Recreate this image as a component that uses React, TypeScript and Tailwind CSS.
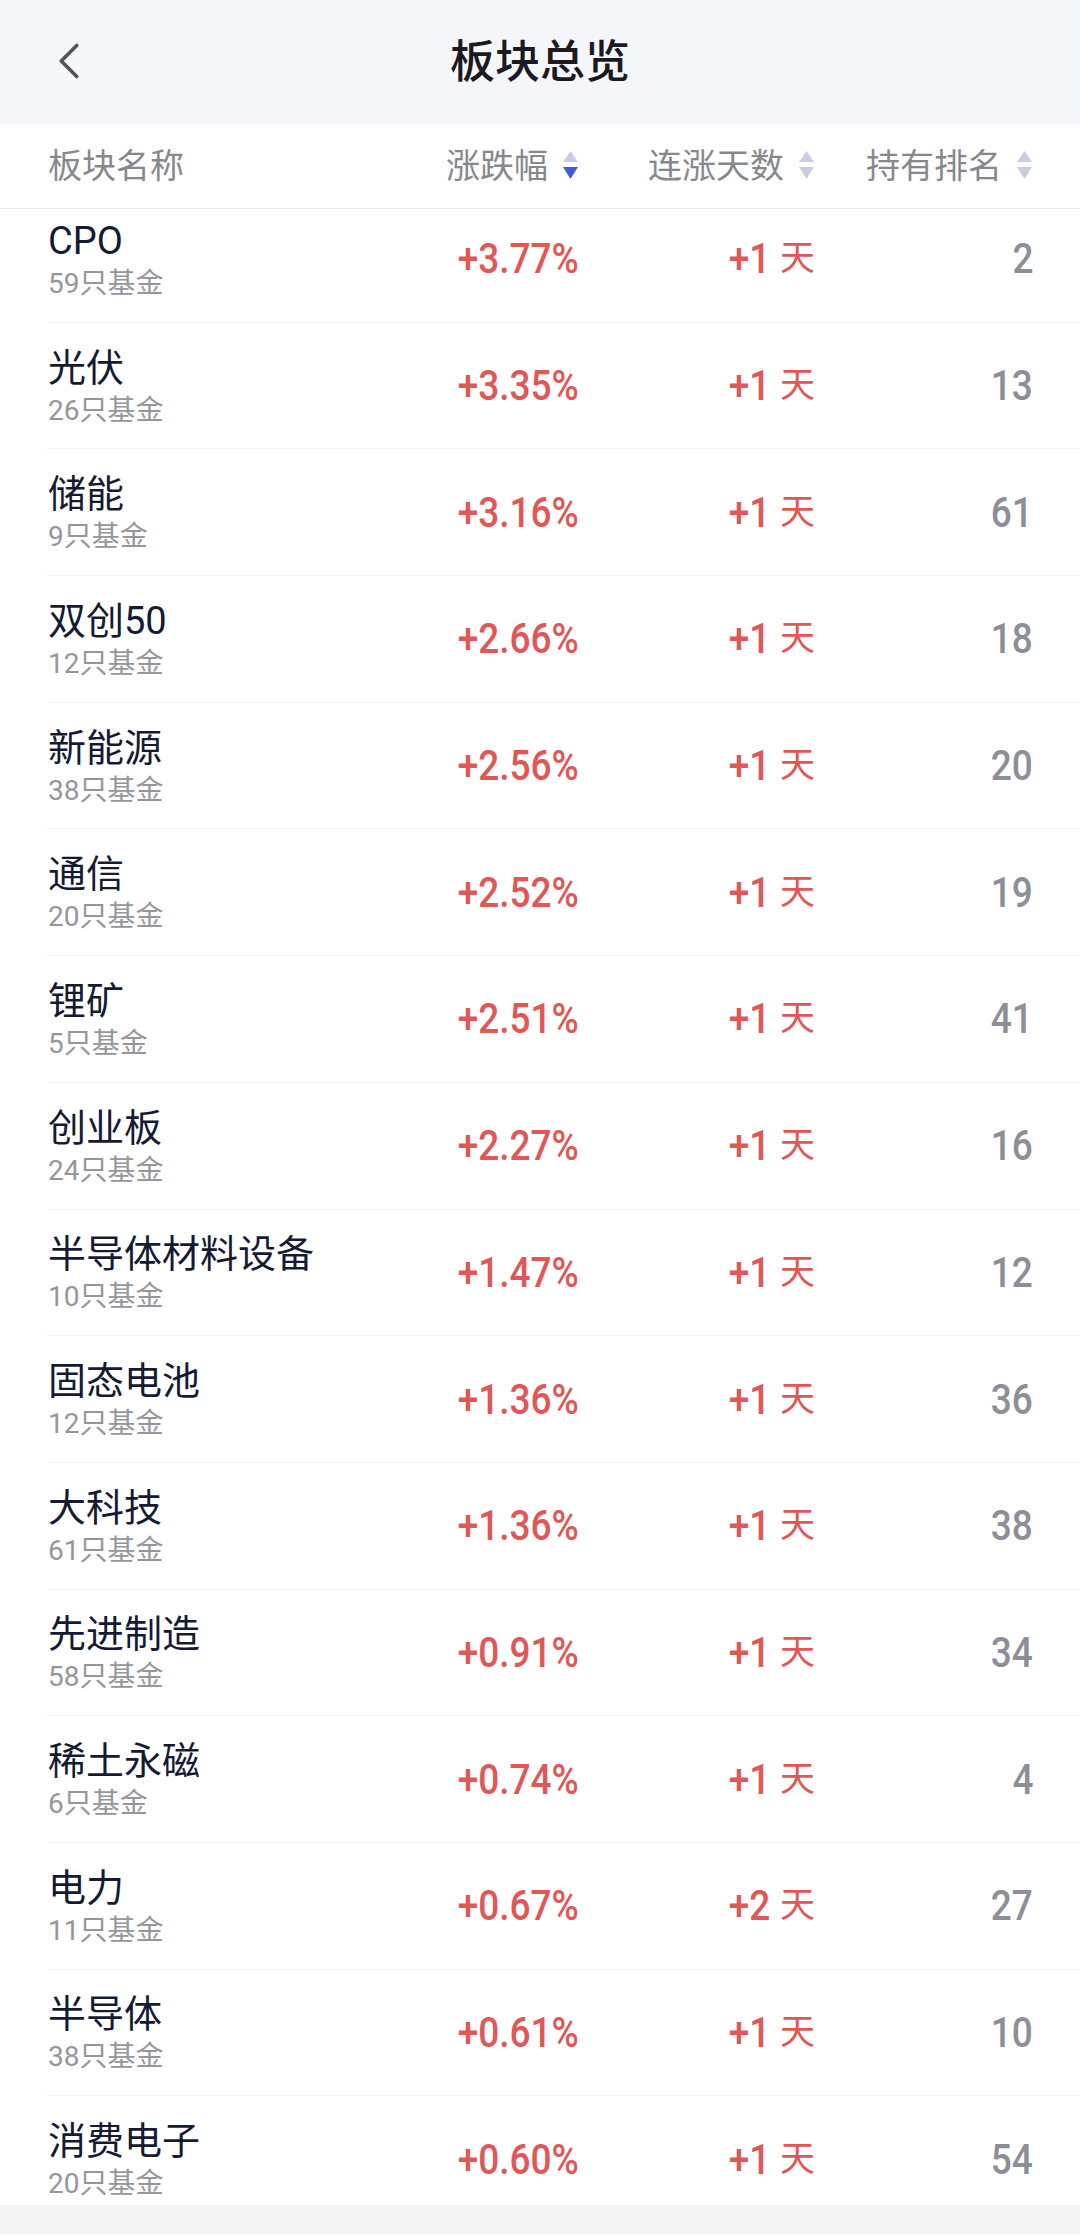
import { ChevronLeft } from "lucide-react";

const sectors = [
  { name: "CPO", funds: 59, change: "+3.77%", days: "+1", rank: 2 },
  { name: "光伏", funds: 26, change: "+3.35%", days: "+1", rank: 13 },
  { name: "储能", funds: 9, change: "+3.16%", days: "+1", rank: 61 },
  { name: "双创50", funds: 12, change: "+2.66%", days: "+1", rank: 18 },
  { name: "新能源", funds: 38, change: "+2.56%", days: "+1", rank: 20 },
  { name: "通信", funds: 20, change: "+2.52%", days: "+1", rank: 19 },
  { name: "锂矿", funds: 5, change: "+2.51%", days: "+1", rank: 41 },
  { name: "创业板", funds: 24, change: "+2.27%", days: "+1", rank: 16 },
  { name: "半导体材料设备", funds: 10, change: "+1.47%", days: "+1", rank: 12 },
  { name: "固态电池", funds: 12, change: "+1.36%", days: "+1", rank: 36 },
  { name: "大科技", funds: 61, change: "+1.36%", days: "+1", rank: 38 },
  { name: "先进制造", funds: 58, change: "+0.91%", days: "+1", rank: 34 },
  { name: "稀土永磁", funds: 6, change: "+0.74%", days: "+1", rank: 4 },
  { name: "电力", funds: 11, change: "+0.67%", days: "+2", rank: 27 },
  { name: "半导体", funds: 38, change: "+0.61%", days: "+1", rank: 10 },
  { name: "消费电子", funds: 20, change: "+0.60%", days: "+1", rank: 54 },
];

const SortIcon = ({ active }: { active?: boolean }) => (
  <svg width="17" height="30" viewBox="0 0 17 30" className="ml-[14px] shrink-0">
    <polygon points="8.5,0 16,11 1,11" fill="#c9cce4" />
    <polygon points="1,16 16,16 8.5,28" fill={active ? "#3f5bd8" : "#c9cce4"} />
  </svg>
);

const App = () => {
  return (
    <div
      className="flex h-[2234px] w-[1080px] flex-col bg-white"
      style={{ fontFamily: 'Roboto, "Noto Sans CJK SC", sans-serif' }}
    >
      {/* top bar */}
      <div className="relative flex h-[124px] shrink-0 items-center justify-center bg-[#f5f6fa]">
        <ChevronLeft
          size={62}
          strokeWidth={1.4}
          className="absolute left-[38px] top-[30px] text-[#50535c]"
        />
        <span className="text-[45px] font-medium leading-none text-[#1b1b1f]">板块总览</span>
      </div>

      {/* table header */}
      <div className="flex h-[85px] shrink-0 items-center border-b border-[#eeeeee] pl-[48px] pr-[47px] text-[34px] text-[#86888e]">
        <div className="w-[352px]">板块名称</div>
        <div className="flex w-[179px] items-center justify-end">
          涨跌幅
          <SortIcon active />
        </div>
        <div className="flex w-[236px] items-center justify-end">
          连涨天数
          <SortIcon />
        </div>
        <div className="flex w-[218px] items-center justify-end">
          持有排名
          <SortIcon />
        </div>
      </div>

      {/* rows */}
      <div className="flex-1 overflow-hidden">
        <div className="-mt-[13px]">
          {sectors.map((s) => (
            <div
              key={s.name}
              className="ml-[47px] flex h-[126.7px] items-center border-b border-[#f1f1f3] pl-px pr-[47px]"
            >
              <div className="flex w-[352px] flex-col gap-[3px]">
                <span className="text-[38px] leading-[46px] text-[#151a33]">{s.name}</span>
                <span className="text-[28px] leading-[33px] text-[#94969c]">{s.funds}只基金</span>
              </div>
              <div className="w-[179px] text-right">
                <span className="inline-block origin-right scale-x-[0.86] text-[43px] font-medium leading-none text-[#e05756]">
                  {s.change}
                </span>
              </div>
              <div className="flex w-[236px] items-center justify-end text-[#e05756]">
                <span className="inline-block origin-right scale-x-[0.86] text-[43px] font-medium leading-none">
                  {s.days}
                </span>
                <span className="ml-[10px] text-[35px] leading-none">天</span>
              </div>
              <div className="w-[218px] text-right">
                <span className="inline-block origin-right scale-x-[0.86] text-[43px] font-medium leading-none text-[#8c8e98]">
                  {s.rank}
                </span>
              </div>
            </div>
          ))}
        </div>
      </div>

      <div className="h-[29px] shrink-0 bg-[#f5f5f6]" />
    </div>
  );
};

export default App;
